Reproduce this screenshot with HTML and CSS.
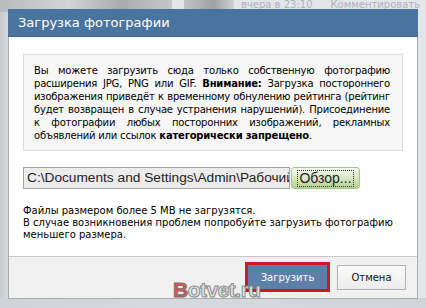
FILE: index.html
```html
<!DOCTYPE html>
<html lang="ru">
<head>
<meta charset="utf-8">
<link rel="stylesheet" href="styles.css">
</head>
<body>
<div class="page">
  <div class="bg-top">
    <div class="bg-photo"></div>
    <div class="bg-photo2"></div>
    <span class="bg-date">вчера в 23:10</span>
    <span class="bg-link">Комментировать</span>
  </div>
  <div class="bg-bottom"></div>
</div>
<div class="dialog">
  <div class="dlg-head">Загрузка фотографии</div>
  <div class="dlg-body">
    <div class="info">
      <div class="jl">Вы можете загрузить сюда только собственную фотографию</div>
      <div class="jl">расширения JPG, PNG или GIF. <b>Внимание:</b> Загрузка постороннего</div>
      <div class="jl">изображения приведёт к временному обнулению рейтинга (рейтинг</div>
      <div class="jl">будет возвращен в случае устранения нарушений). Присоединение</div>
      <div class="jl">к фотографии любых посторонних изображений, рекламных</div>
      <div class="ll">объявлений или ссылок <b>категорически запрещено</b>.</div>
    </div>
    <div class="file-row">
      <div class="file-input"><span class="file-path">C:\Documents and Settings\Admin\Рабочий</span></div>
      <div class="browse"><span class="browse-label">Обзор...</span></div>
    </div>
    <div class="notes">
      <div>Файлы размером более 5 MB не загрузятся.</div>
      <div>В случае возникновения проблем попробуйте загрузить фотографию</div>
      <div>меньшего размера.</div>
    </div>
  </div>
  <div class="dlg-foot">
    <div class="btn btn-primary">Загрузить</div>
    <div class="btn btn-cancel">Отмена</div>
  </div>
</div>
<div class="watermark"><span class="wm-b">B</span>otvet.ru</div>
</body>
</html>
```

FILE: styles.css
```css
html, body {
  margin: 0;
  padding: 0;
}
body {
  width: 426px;
  height: 308px;
  overflow: hidden;
  background: #dfe1e4;
  font-family: "DejaVu Sans", Tahoma, sans-serif;
  position: relative;
}
.page {
  width: 426px;
  height: 308px;
  display: flex;
  flex-direction: column;
  justify-content: space-between;
  background: linear-gradient(90deg, #c9cbcd 0, #d6d8da 8px, #e3e5e8 9px);
  overflow: hidden;
}
.bg-top {
  height: 12px;
  display: flex;
  align-items: flex-start;
  color: #aeb4bd;
  overflow: hidden;
}
.bg-photo {
  width: 172px;
  height: 12px;
  flex: none;
  background: linear-gradient(90deg, #b9bbbd, #d3d4d5 40%, #a9abae 70%, #c6c7c9);
}
.bg-photo2 {
  width: 50px;
  height: 12px;
  flex: none;
  margin-left: 12px;
  background: linear-gradient(90deg, #c1c2c4, #9fa2a5 60%, #cfd0d2);
}
.bg-date {
  margin-left: 7px;
  line-height: 12px;
  margin-top: -1px;
  font-size: 10px;
  white-space: nowrap;
}
.bg-link {
  margin-left: 18px;
  line-height: 12px;
  margin-top: -1px;
  font-size: 10px;
  white-space: nowrap;
}
.bg-bottom {
  height: 10px;
  background: linear-gradient(90deg, #cfd2d6, #d6d9dd 40%, #d1d4d8);
}

.dialog {
  position: absolute;
  left: 8px;
  top: 9px;
  width: 408px;
  border: 1px solid #a9adb2;
  border-top: none;
  background: #ffffff;
}
.dlg-head {
  height: 28px;
  margin: 0 -1px;
  background: #4a74a0;
  border-bottom: 1px solid #3f6690;
  box-sizing: border-box;
  color: #ffffff;
  font-size: 13px;
  line-height: 27px;
  padding-left: 10px;
}
.dlg-body {
  height: 220px;
  box-sizing: border-box;
  padding: 17px 14px 0 14px;
  border-bottom: 1px solid #c8c8c8;
}
.info {
  background: #f7f7f7;
  border: 1px solid #dcdcdc;
  padding: 9px 12px 8px 10px;
  font-size: 10px;
  line-height: 13px;
  letter-spacing: -0.2px;
  color: #000;
}
.jl {
  white-space: nowrap;
  text-align: justify;
  text-align-last: justify;
}
.ll {
  white-space: nowrap;
}
.info b {
  font-weight: bold;
}
.file-row {
  display: flex;
  margin-top: 16px;
  height: 22px;
}
.file-input {
  width: 267px;
  height: 22px;
  box-sizing: border-box;
  border: 1px solid #a4a4a4;
  background: #ececec;
  padding-left: 3px;
  overflow: hidden;
  display: flex;
  align-items: center;
}
.file-path {
  font-family: "Liberation Sans", Arial, sans-serif;
  font-size: 13.7px;
  line-height: 18px;
  white-space: nowrap;
  color: #222;
}
.browse {
  width: 69px;
  height: 22px;
  margin-left: 1px;
  box-sizing: border-box;
  border: 1px solid #a8c48c;
  border-radius: 3px;
  background: linear-gradient(180deg, #f4f9ee 0%, #dcebc9 45%, #b3d18f 100%);
  display: flex;
  align-items: center;
  justify-content: center;
}
.browse-label {
  font-family: "Liberation Sans", Arial, sans-serif;
  font-size: 14px;
  line-height: 15px;
  color: #222;
  border: 1px dotted #333;
  padding: 0 1px;
}
.notes {
  margin-top: 16px;
  font-size: 10px;
  line-height: 12px;
  color: #000;
}
.dlg-foot {
  height: 41px;
  background: #f0f0f0;
  display: flex;
  align-items: center;
  justify-content: flex-end;
  padding-right: 11px;
  gap: 10px;
}
.btn {
  display: flex;
  align-items: center;
  justify-content: center;
  box-sizing: border-box;
  font-size: 10px;
}
.btn-primary {
  width: 79px;
  height: 24px;
  background: #5d80aa;
  color: #fff;
  outline: 3px solid #c81a2a;
  margin-top: -1px;
}
.btn-cancel {
  width: 69px;
  height: 25px;
  border: 1px solid #b2b2b2;
  background: linear-gradient(180deg, #fbfbfb, #ececec);
  color: #111;
}
.watermark {
  position: absolute;
  left: 173px;
  top: 279px;
  font-family: "Liberation Sans", Arial, sans-serif;
  font-weight: bold;
  font-size: 21px;
  line-height: 22px;
  letter-spacing: -0.5px;
  color: #e6e6e6;
  -webkit-text-stroke: 1px #8a8a8a;
}
.wm-b {
  color: #d8565f;
  -webkit-text-stroke: 1px #8c6a6a;
}
```
